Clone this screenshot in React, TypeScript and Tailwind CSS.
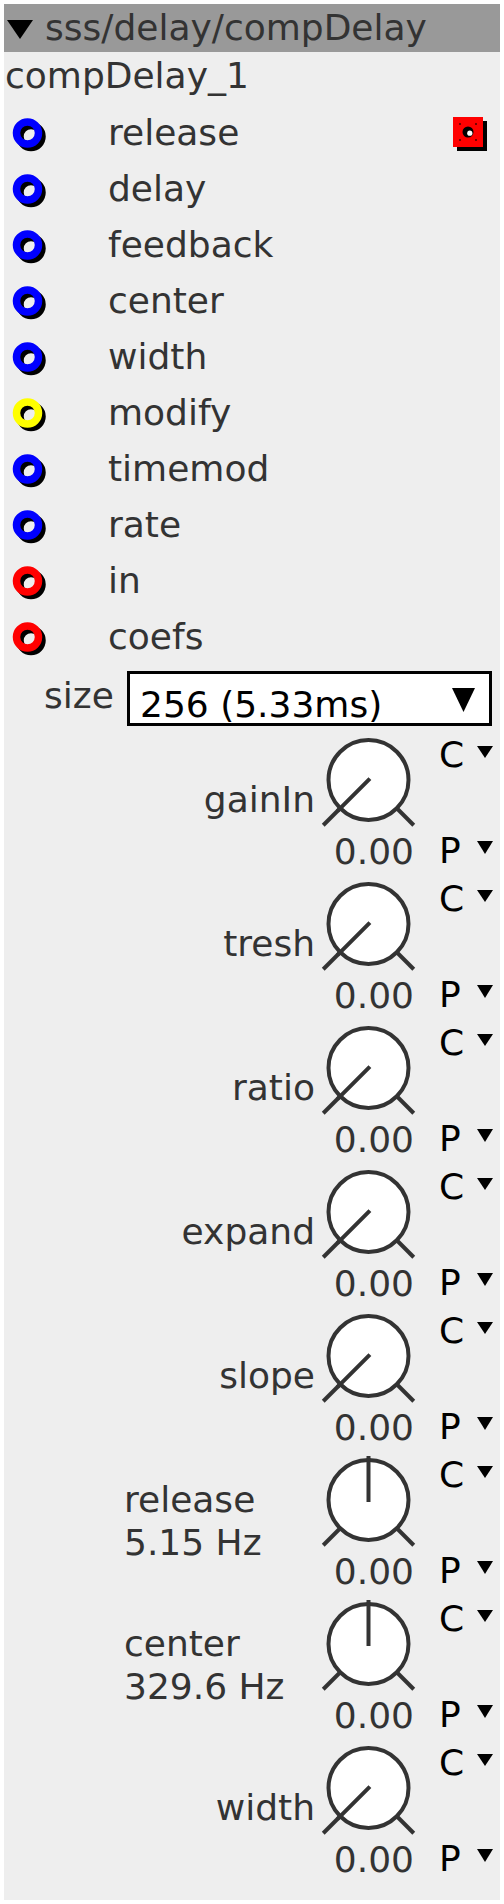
import React from 'react';

type Inlet = { name: string; color: string };
type Knob = { label: string; sub?: string; angle: number };

const inlets: Inlet[] = [
  { name: 'release', color: '#0000ff' },
  { name: 'delay', color: '#0000ff' },
  { name: 'feedback', color: '#0000ff' },
  { name: 'center', color: '#0000ff' },
  { name: 'width', color: '#0000ff' },
  { name: 'modify', color: '#ffff00' },
  { name: 'timemod', color: '#0000ff' },
  { name: 'rate', color: '#0000ff' },
  { name: 'in', color: '#ff0000' },
  { name: 'coefs', color: '#ff0000' },
];

const knobs: Knob[] = [
  { label: 'gainIn', angle: -135 },
  { label: 'tresh', angle: -135 },
  { label: 'ratio', angle: -135 },
  { label: 'expand', angle: -135 },
  { label: 'slope', angle: -135 },
  { label: 'release', sub: '5.15 Hz', angle: 0 },
  { label: 'center', sub: '329.6 Hz', angle: 0 },
  { label: 'width', angle: -135 },
];

function Ring({ color }: { color: string }) {
  return (
    <svg width="44" height="44" viewBox="0 0 44 44">
      <circle cx="25" cy="25.5" r="11" fill="none" stroke="#000" strokeWidth="7.5" />
      <circle cx="21.5" cy="22" r="11" fill="none" stroke={color} strokeWidth="7.5" />
    </svg>
  );
}

function Outlet() {
  return (
    <svg width="40" height="40" viewBox="0 0 40 40">
      <rect x="6" y="6" width="30" height="30" fill="#000" />
      <rect x="2" y="2" width="30" height="30" fill="#ff0000" />
      <rect x="8" y="8" width="2" height="2" fill="#7a0000" />
      <rect x="24" y="8" width="2" height="2" fill="#7a0000" />
      <rect x="8" y="24" width="2" height="2" fill="#7a0000" />
      <rect x="24" y="24" width="2" height="2" fill="#7a0000" />
      <circle cx="17" cy="17" r="5.5" fill="#000" />
      <circle cx="18.8" cy="18.2" r="2.6" fill="#fff" />
    </svg>
  );
}

function Tri({ w, h }: { w: number; h: number }) {
  return (
    <svg width={w} height={h} viewBox={`0 0 ${w} ${h}`}>
      <polygon points={`0,0 ${w},0 ${w / 2},${h}`} fill="#000" />
    </svg>
  );
}

function KnobDial({ angle }: { angle: number }) {
  const cx = 50.5;
  const cy = 52;
  const rad = (angle * Math.PI) / 180;
  const dx = Math.sin(rad);
  const dy = -Math.cos(rad);
  const d = 0.7071;
  return (
    <svg width="104" height="104" viewBox="0 0 104 104">
      <circle cx={cx} cy={cy} r="40" fill="#fff" stroke="#333" strokeWidth="4" />
      <line x1={cx - 40 * d} y1={cy + 40 * d} x2={cx - 64 * d} y2={cy + 64 * d} stroke="#333" strokeWidth="4" />
      <line x1={cx + 40 * d} y1={cy + 40 * d} x2={cx + 64 * d} y2={cy + 64 * d} stroke="#333" strokeWidth="4" />
      <line x1={cx - 2 * dx} y1={cy - 2 * dy} x2={cx + 44 * dx} y2={cy + 44 * dy} stroke="#333" strokeWidth="4" />
    </svg>
  );
}

function KnobRow({ knob }: { knob: Knob }) {
  return (
    <div className="flex h-[144px]">
      {/* label */}
      <div className="w-[314px] text-[36px] text-[#333]">
        {knob.sub ? (
          <div className="mt-[30px] pl-[120px] leading-[43px]">
            <div>{knob.label}</div>
            <div>{knob.sub}</div>
          </div>
        ) : (
          <div className="mt-[52px] pr-[3px] text-right leading-[40px]">{knob.label}</div>
        )}
      </div>

      {/* dial + value */}
      <div className="flex w-[110px] flex-col">
        <KnobDial angle={knob.angle} />
        <div className="w-[96px] text-right text-[36px] leading-[40px] text-[#333]">0.00</div>
      </div>

      {/* C / P selectors */}
      <div className="flex flex-1 flex-col justify-between pl-[11px] text-[36px] text-black">
        <div className="flex items-start">
          <span className="leading-[54px]">C</span>
          <div className="ml-[13px] mt-[18px]">
            <Tri w={16} h={12} />
          </div>
        </div>
        <div className="flex h-[42px] items-start">
          <span className="leading-[42px]">P</span>
          <div className="ml-[16px] mt-[11px]">
            <Tri w={16} h={13} />
          </div>
        </div>
      </div>
    </div>
  );
}

export default function App() {
  return (
    <div className="min-h-[1904px] w-[504px] bg-white p-[4px] font-['DejaVu_Sans',sans-serif]">
      <div className="h-[1896px] w-[496px] bg-[#eeeeee]">
        {/* title bar */}
        <div className="flex h-[48px] items-center bg-[#999999] text-[36px] text-[#333]">
          <div className="ml-[3px] mt-[2px]">
            <Tri w={26} h={19} />
          </div>
          <span className="ml-[12px] leading-[48px]">sss/delay/compDelay</span>
        </div>

        <div className="pl-[1px] text-[36px] leading-[48px] text-[#333]">compDelay_1</div>

        {/* inlets */}
        <div className="mt-[5px]">
          {inlets.map((inlet, i) => (
            <div key={inlet.name} className="flex h-[56px] items-center">
              <div className="ml-[2px]">
                <Ring color={inlet.color} />
              </div>
              <span className="ml-[58px] text-[36px] leading-[54px] text-[#333]">{inlet.name}</span>
              {i === 0 && (
                <div className="ml-auto mr-[9px] mt-[10px] self-start">
                  <Outlet />
                </div>
              )}
            </div>
          ))}
        </div>

        {/* size selector */}
        <div className="flex h-[63px] items-start">
          <div className="mt-[11px] w-[123px] pl-[40px] text-[36px] leading-[40px] text-[#333]">size</div>
          <div className="mt-[6px] flex h-[55px] w-[365px] items-start justify-between border-[3px] border-black bg-white">
            <span className="pl-[10px] pt-[11px] text-[36px] leading-[40px] text-black">256 (5.33ms)</span>
            <div className="mr-[14px] mt-[14px]">
              <Tri w={23} h={24} />
            </div>
          </div>
        </div>

        {/* knobs */}
        {knobs.map((k) => (
          <KnobRow key={k.label + (k.sub ?? '')} knob={k} />
        ))}
      </div>
    </div>
  );
}
